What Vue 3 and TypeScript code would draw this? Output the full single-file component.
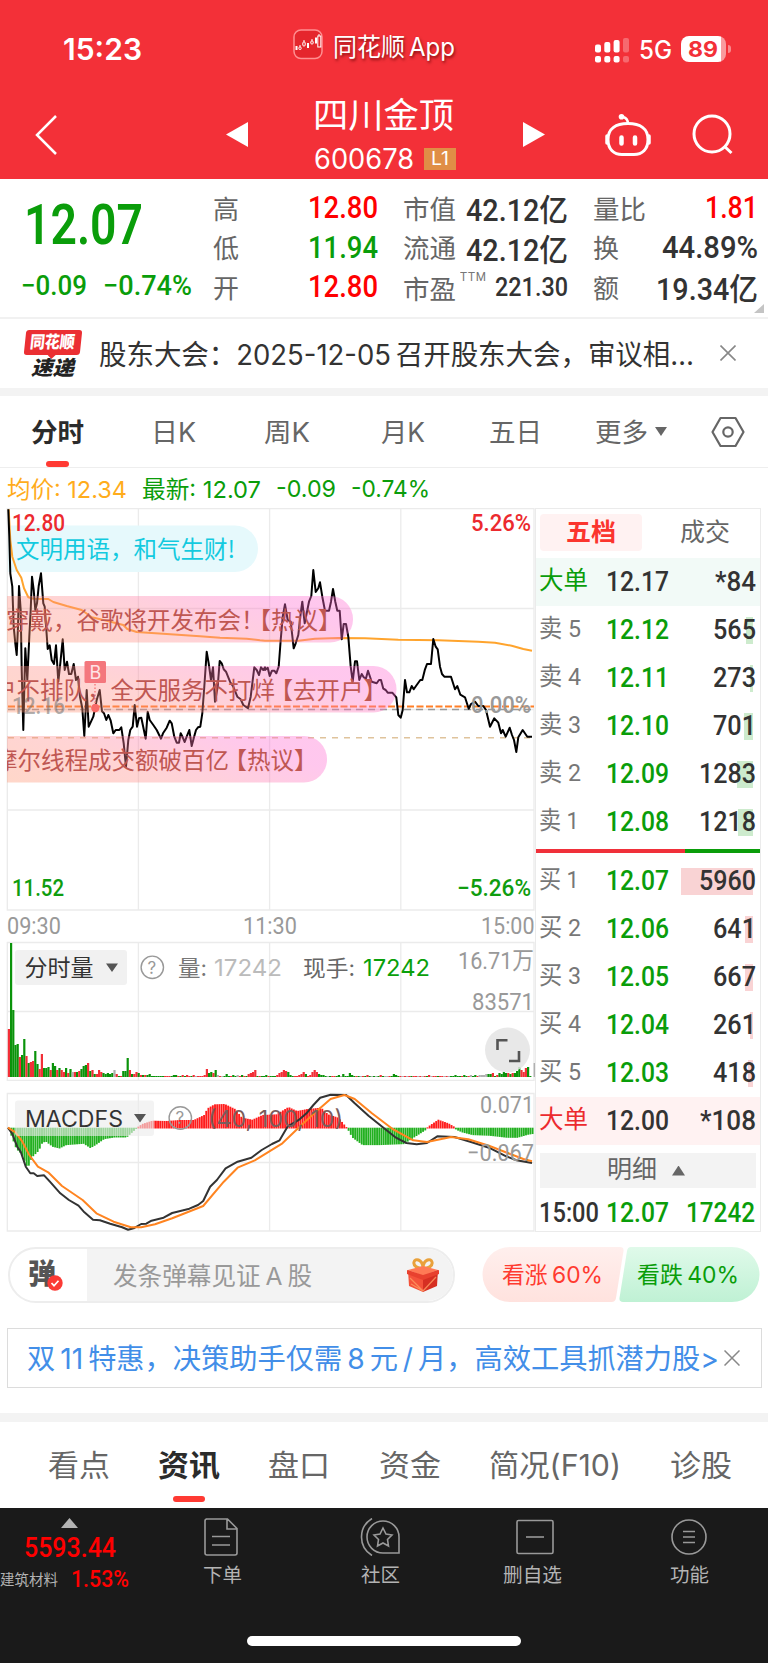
<script setup lang="ts">
type Pt = [number, number]
interface Label { t: string; x: number; y: number; w: number; size: number; fill: string; font?: string; bold?: boolean }
interface Level { name: string; price: string; vol: string; depth: number; nameW: number; volW: number }

// Squeezes or stretches a text horizontally so that it takes the given width
const vFit = {
  mounted(el: HTMLElement, binding: { value: number }) {
    const natural = el.getBoundingClientRect().width
    el.style.transformOrigin = '0 50%'
    el.style.transform = `scaleX(${binding.value / natural})`
    el.style.marginRight = `${binding.value - natural}px`
  },
}

const periods = [
  { t: '分时', w: 53, x: 31 }, { t: '日K', w: 45, x: 151 }, { t: '周K', w: 46, x: 264 },
  { t: '月K', w: 44, x: 381 }, { t: '五日', w: 53, x: 489 }, { t: '更多', w: 53, x: 595 },
]
const sections = [
  { t: '看点', w: 62, x: 48 }, { t: '资讯', w: 62, x: 158 }, { t: '盘口', w: 62, x: 268 },
  { t: '资金', w: 62, x: 379 }, { t: '简况(F10)', w: 132, x: 489 }, { t: '诊股', w: 62, x: 670 },
]
function gapBefore(list: { w: number; x: number }[], i: number): string {
  return `${i === 0 ? list[0].x : list[i].x - list[i - 1].x - list[i - 1].w}px`
}

const sells: Level[] = [
  { name: '卖 5', price: '12.12', vol: '565', depth: 7, nameW: 42, volW: 43 },
  { name: '卖 4', price: '12.11', vol: '273', depth: 3, nameW: 42, volW: 43 },
  { name: '卖 3', price: '12.10', vol: '701', depth: 9, nameW: 42, volW: 43 },
  { name: '卖 2', price: '12.09', vol: '1283', depth: 16, nameW: 42, volW: 57 },
  { name: '卖 1', price: '12.08', vol: '1218', depth: 15, nameW: 40, volW: 57 },
]
const buys: Level[] = [
  { name: '买 1', price: '12.07', vol: '5960', depth: 72, nameW: 40, volW: 57 },
  { name: '买 2', price: '12.06', vol: '641', depth: 8, nameW: 42, volW: 43 },
  { name: '买 3', price: '12.05', vol: '667', depth: 8, nameW: 42, volW: 43 },
  { name: '买 4', price: '12.04', vol: '261', depth: 3, nameW: 42, volW: 43 },
  { name: '买 5', price: '12.03', vol: '418', depth: 5, nameW: 42, volW: 43 },
]

function parse(s: string): Pt[] {
  return s.trim().split(/\s+/).map((p) => p.split(',').map(Number) as Pt)
}
function line(pts: Pt[]): string {
  return pts.map(([x, y]) => `${x.toFixed(1)},${y.toFixed(1)}`).join(' ')
}
const place = (s: string, dx: number, dy: number, kx: number): Pt[] =>
  parse(s).map(([x, y]) => [dx + x / kx, dy + y / 3])

const morning = '25,28 28,110 31,220 37,260 41,380 46,430 50,465 54,380 57,258 62,330 65,510 70,690 76,445 82,540 88,410 92,330 96,230 101,270 106,330 111,310 116,258 123,220 130,310 134,320 143,447 149,436 155,480 162,492 168,436 175,545 181,490 188,418 194,510 201,485 207,522 214,522 221,492 228,540 234,530 240,590 247,625 253,708 260,570 266,680 280,650 290,600 299,570 306,634 312,640 319,660 325,645 332,662 340,700 347,690 358,690 364,682 371,730 378,800 385,720 391,690 398,680 404,615 411,680 417,655 424,653 437,716 443,635 449,660 460,675 470,690 483,716 489,700 500,683 509,662 515,670 523,710 530,728 537,728 542,700 548,712 554,726 560,710 568,690 575,738 582,712 588,690 594,682 601,680 607,640 613,560 620,455 626,490 633,540 639,502 645,605 653,560 659,483 665,490 671,508 678,515 690,545 700,560 712,590 722,598 730,615 744,625 752,590 763,502 770,510 777,525 783,502 790,510 795,502'
const afternoon = '0,510 8,503 14,528 21,512 28,512 34,520 41,500 47,420 53,350 60,313 68,360 77,365 86,445 92,430 100,405 107,340 112,305 119,370 125,340 132,305 139,288 145,210 152,276 160,265 165,247 172,290 180,332 192,332 198,305 204,267 211,305 217,332 224,332 230,418 236,372 243,372 250,410 257,500 263,545 270,484 276,484 283,540 290,522 296,532 303,535 309,512 320,545 335,550 342,540 348,540 355,566 362,570 368,578 382,578 394,592 400,645 407,653 413,630 420,540 426,577 433,577 440,558 446,568 455,555 466,540 472,540 480,508 486,492 498,492 505,417 512,440 518,448 525,500 531,522 538,530 558,530 570,568 577,558 586,584 600,592 611,626 618,612 630,605 640,618 655,618 663,630 675,680 688,655 700,668 708,700 713,690 722,710 734,683 741,705 747,720 754,756 760,712 773,690 787,710 801,710'
const price = line([...place(morning, 0, 500, 3), ...place(afternoon, 265, 500, 3)])
const average = line([
  ...place('26,28 31,120 37,170 50,210 64,233 72,265 85,292 100,296 145,297 160,306 200,318 245,330 275,352 320,362 370,375 382,387 410,396 500,402 600,409 660,413 740,416 780,421', 0, 500, 3),
  ...place('0,422 100,422 150,416 220,414 300,415 400,419 520,421 640,425 690,428 740,437 775,447 801,452', 265, 500, 3),
])

const K = 2.904
const dif = line(place('23,128 35,145 50,185 60,200 75,245 88,265 98,265 108,273 128,271 145,290 175,325 200,345 228,362 245,382 270,404 290,406 320,416 355,427 372,434 388,430 410,417 425,416 440,407 475,398 500,384 550,371 575,360 590,348 610,305 630,285 655,250 690,230 730,218 760,195 790,177 812,166 835,125 870,103 890,85 910,60 930,38 960,29 1005,30 1030,55 1070,92 1110,125 1150,158 1180,174 1210,178 1240,174 1270,154 1320,156 1370,172 1420,188 1470,214 1500,226 1545,234', 0, 1085, K))
const dea = line(place('23,128 45,142 65,170 85,210 110,245 140,262 180,303 240,345 280,385 330,410 380,427 410,427 450,418 500,400 590,363 650,290 690,248 740,226 820,175 870,125 920,78 960,42 1000,30 1030,42 1080,85 1140,132 1200,166 1240,171 1310,156 1360,163 1420,182 1480,206 1520,222 1545,229', 0, 1085, K))

const zeroY = 1127.7
const histShape = place('23,130 45,190 60,205 78,248 90,215 110,195 120,172 130,167 150,183 170,188 190,178 240,174 260,187 275,178 300,160 330,155 365,155 392,130 410,117 440,107 480,108 520,105 560,105 590,90 600,70 620,58 650,57 680,72 700,98 730,104 760,90 800,88 835,66 860,78 890,72 930,68 950,88 980,98 1003,126 1008,132 1020,155 1050,178 1100,178 1170,175 1200,155 1235,132 1240,125 1270,104 1300,115 1318,126 1322,132 1340,140 1370,148 1420,150 1470,156 1500,156 1530,147 1548,144', 0, 1085, K)
const hist = Array.from({ length: 240 }, (_, i) => {
  const x = 8.2 + i * 2.19
  let j = 0
  while (j < histShape.length - 2 && histShape[j + 1][0] < x) j++
  const [x0, y0] = histShape[j]
  const [x1, y1] = histShape[j + 1]
  const y = y0 + ((y1 - y0) * (x - x0)) / (x1 - x0)
  return { x, y: Math.min(y, zeroY), h: Math.abs(y - zeroY) + 0.8, fill: y < zeroY ? '#ff1c1c' : '#22b020' }
})

// One entry per minute: r rising, g falling, n unchanged, followed by the bar height
const volumeData = 'r48 g134 g67 g32 g33 r20 g22 g38 r21 g14 r15 r16 g26 g13 r8 r23 g9 g9 g10 r7 g14 g11 r7 g9 r7 r5 g9 r4 g8 n5 r5 g5 r6 g8 g11 g12 r14 g6 r7 g3 r3 r7 r5 g4 g3 g4 g3 g4 n7 r3 g1 r1 g6 g6 g19 r7 g3 r3 r5 g4 r2 g2 r2 g2 g3 g1 g1 g1 g1 g1 g1 r1 r1 r1 g1 g2 g2 r1 g1 r2 g1 r2 r1 g1 r2 n1 r1 r1 r1 r2 r8 g4 g5 r4 g7 n2 r1 n1 g1 g3 g1 r1 g2 g1 n2 r1 g2 r1 g1 r3 r4 r5 r7 g1 r1 g1 g1 g2 r1 g1 g1 g1 r2 r4 r5 r7 r6 g5 g2 g1 r1 r1 r2 r3 r5 g3 r1 r2 r5 r7 r5 g3 g2 g2 g1 n1 g1 r1 r1 g1 g2 n1 g3 g1 g1 g4 g2 g1 r1 g1 n1 r1 g1 r2 g1 n1 g1 n1 g1 r2 g1 n1 n1 r1 g1 g3 g2 g1 r1 n1 r1 n1 r1 g1 r1 r1 n1 r1 n1 r1 g1 r2 n1 r1 r1 g1 r1 r1 n1 r1 n1 g1 g1 g2 g1 g1 r1 g2 g1 r1 n2 g1 g2 r1 n2 n2 n2 n3 g3 g3 r4 g1 r2 g4 g3 g5 g4 r4 g3 r4 g4 g6 g10 r7 r5 r9 g10 g1 n0 n14'
const tint: Record<string, string> = { r: '#f22f37', g: '#0a930a', n: '#b0b0b0' }
const volume = volumeData.split(' ').map((d, i) => ({ x: 7.8 + i * 2.2, h: Number(d.slice(1)), fill: tint[d[0]] }))

const din = 'Roboto, "Noto Sans CJK SC", sans-serif'
const sans = 'Inter, "Noto Sans CJK SC", sans-serif'
const labels: Label[] = [
  { t: '12.80', x: 12, y: 531, w: 53, size: 24, fill: '#ec2a2e', bold: true },
  { t: '5.26%', x: 471, y: 531, w: 60, size: 24, fill: '#ec2a2e', bold: true },
  { t: '12.16', x: 12, y: 713.5, w: 53, size: 24, fill: 'rgba(110,110,110,.55)', bold: true },
  { t: '0.00%', x: 471, y: 713, w: 60, size: 24, fill: '#999', bold: true },
  { t: '11.52', x: 12, y: 896, w: 52, size: 24, fill: '#0f9d0f', bold: true },
  { t: '−5.26%', x: 457, y: 896, w: 74, size: 24, fill: '#0f9d0f', bold: true },
  { t: '09:30', x: 7, y: 934, w: 54, size: 24.5, fill: '#999' },
  { t: '11:30', x: 243, y: 934, w: 54, size: 24.5, fill: '#999' },
  { t: '15:00', x: 481, y: 934, w: 53.5, size: 24.5, fill: '#999' },
  { t: '16.71万', x: 458, y: 969, w: 76, size: 24, fill: '#999' },
  { t: '83571', x: 472, y: 1010, w: 62, size: 24, fill: '#999' },
  { t: '0.071', x: 480, y: 1113, w: 54, size: 24, fill: '#999' },
  { t: '−0.067', x: 467, y: 1161, w: 67, size: 24, fill: '#999' },
  { t: '分时量', x: 24.5, y: 975.7, w: 69, size: 23, fill: '#333' },
  { t: '量:', x: 178, y: 975.5, w: 29, size: 22, fill: '#777', font: sans },
  { t: '17242', x: 214, y: 975.5, w: 68, size: 23, fill: '#bbb', font: sans },
  { t: '现手:', x: 303, y: 975.5, w: 52, size: 22, fill: '#666', font: sans },
  { t: '17242', x: 363, y: 975.5, w: 67, size: 23, fill: '#0aa00a', font: sans },
  { t: 'MACDFS', x: 25, y: 1127, w: 98, size: 22.5, fill: '#333', font: sans },
  { t: '(40, 100, 10)', x: 208, y: 1127, w: 135, size: 23, fill: '#7b5c5c', font: sans },
]
const bullets = [
  { text: '穿戴，谷歌将开发布会！', link: '【热议】', pull: -17, x: 6, y: 596, end: 353 },
  { text: '户不排队，全天服务不打烊', link: '【去开户】', pull: -5.5, x: -7, y: 666, end: 396.5 },
  { text: '摩尔线程成交额破百亿', link: '【热议】', pull: -5.5, x: -6, y: 736, end: 327 },
]
</script>

<template>
  <div class="phone">
    <header class="top">
      <div class="status">
        <span v-fit="79" class="clock">15:23</span>
        <svg class="appicon" width="30" height="31" viewBox="0 0 30 31">
          <rect x="1" y="1" width="28" height="28.5" rx="7" fill="#e5262d" stroke="#ff8f91" stroke-width="1.5" />
          <g stroke="#fff" fill="none">
            <path d="M3.500 17v4M15 14v5M23 8.500v6" stroke-width="2" />
            <path d="M7 16v2M11 11v2M19 10v2M26 5v2" />
            <rect x="5.800" y="18" width="2.400" height="2.500" rx="1" /><rect x="9.800" y="13" width="2.400" height="4" rx="1" />
            <rect x="17.800" y="12" width="2.400" height="3" rx="1" /><rect x="24.800" y="7" width="3" height="11" />
          </g>
        </svg>
        <span v-fit="122" class="appname">同花顺 App</span>
        <svg class="signal" width="35" height="26" viewBox="0 0 35 26" fill="#fff">
          <rect x="0" y="7.500" width="6" height="8" rx="2" /><rect x="9.300" y="5" width="6" height="10.500" rx="2" />
          <rect x="18.600" y="3" width="6" height="12.500" rx="2" /><rect x="28" y="1" width="6" height="14.500" rx="2" opacity=".28" />
          <rect x="0" y="19" width="6" height="6.500" rx="2" /><rect x="9.300" y="19" width="6" height="6.500" rx="2" />
          <rect x="18.600" y="19" width="6" height="6.500" rx="2" /><rect x="28" y="19" width="6" height="6.500" rx="2" opacity=".28" />
        </svg>
        <span v-fit="33" class="net">5G</span>
        <div class="battery"><span v-fit="30">89</span></div>
        <i class="nub"></i>
      </div>
      <div class="nav">
        <svg class="back" width="24" height="42" viewBox="0 0 24 42"><path d="M22 2 3 21l19 19" fill="none" stroke="#fff" stroke-width="2.500" /></svg>
        <svg class="prev" width="22" height="25" viewBox="0 0 22 25"><path d="M22 0v25L0 12.500z" fill="#fff" /></svg>
        <div class="stock">
          <span v-fit="141" class="name">四川金顶</span>
          <div class="code"><span v-fit="100">600678</span><b><span v-fit="18">L1</span></b></div>
        </div>
        <svg class="next" width="22" height="25" viewBox="0 0 22 25"><path d="M0 0v25l22-12.500z" fill="#fff" /></svg>
        <svg class="robot" width="48" height="44" viewBox="0 0 48 44" fill="none" stroke="#fff" stroke-width="3">
          <path d="M24 11c0-4-1-6-5-7" stroke-width="2.500" /><circle cx="17.500" cy="3.800" r="2.800" fill="#fff" stroke="none" />
          <path d="M24 10.500c12 0 20 5 20 16 0 10-6 15-14 15H18c-8 0-14-5-14-15 0-11 8-16 20-16z" />
          <path d="M3 23v7M45 23v7" stroke-width="3.500" stroke-linecap="round" /><path d="M17.500 24.500v6M31 24.500v6" stroke-width="4.500" stroke-linecap="round" />
        </svg>
        <svg class="search" width="42" height="42" viewBox="0 0 42 42" fill="none" stroke="#fff" stroke-width="3"><circle cx="20" cy="20" r="18" /><path d="m32 32 7.500 7" /></svg>
      </div>
    </header>

    <section class="quote">
      <div class="last">
        <span v-fit="119" class="big">12.07</span>
        <div class="chg"><span v-fit="66">−0.09</span><span v-fit="89">−0.74%</span></div>
      </div>
      <dl class="c1">
        <div><dt v-fit="26">高</dt><dd v-fit="70" class="red">12.80</dd></div>
        <div><dt v-fit="26">低</dt><dd v-fit="70" class="green">11.94</dd></div>
        <div><dt v-fit="26">开</dt><dd v-fit="70" class="red">12.80</dd></div>
      </dl>
      <dl class="c2">
        <div><dt v-fit="53">市值</dt><dd v-fit="102">42.12亿</dd></div>
        <div><dt v-fit="53">流通</dt><dd v-fit="102">42.12亿</dd></div>
        <div><dt v-fit="53" class="pe">市盈</dt><sup v-fit="27">TTM</sup><dd v-fit="73" class="small">221.30</dd></div>
      </dl>
      <dl class="c3">
        <div><dt v-fit="53">量比</dt><dd v-fit="53" class="red">1.81</dd></div>
        <div><dt v-fit="26">换</dt><dd v-fit="96">44.89%</dd></div>
        <div><dt v-fit="26">额</dt><dd v-fit="102">19.34亿</dd></div>
      </dl>
      <i class="corner"></i>
    </section>

    <section class="news">
      <div class="badge">
        <div class="badge-top"><span v-fit="47">同花顺</span></div>
        <span v-fit="43" class="badge-bottom">速递</span>
      </div>
      <span v-fit="595" class="headline">股东大会：2025-12-05 召开股东大会，审议相…</span>
      <svg width="16" height="16" viewBox="0 0 16 16" stroke="#888" stroke-width="1.600"><path d="m.500.500 15 15m0-15-15 15" /></svg>
    </section>

    <nav class="periods">
      <span v-for="(p, i) in periods" :key="p.t" class="cell" :class="{ on: i === 0 }" :style="{ marginLeft: gapBefore(periods, i), width: p.w + 'px' }"><span v-fit="p.w">{{ p.t }}</span></span>
      <i class="caret"></i>
      <svg class="hex" width="34" height="32" viewBox="0 0 34 32" fill="none" stroke="#666" stroke-width="2.200"><path d="M9.500 2h15L32.500 16l-8 14h-15L1.500 16z" stroke-linejoin="round" /><circle cx="17" cy="16" r="4.700" /></svg>
    </nav>

    <div class="ticks">
      <span v-fit="120" class="avg">均价: 12.34</span><span v-fit="119">最新: 12.07</span><span v-fit="60">-0.09</span><span v-fit="79">-0.74%</span>
    </div>

    <main class="board">
      <svg class="chart" width="535" height="725" viewBox="0 508 535 725">
        <defs>
          <linearGradient id="bullet" x1="0" x2="1" y1="0.300" y2="0">
            <stop offset="0" stop-color="#ff926f" /><stop offset=".35" stop-color="#ff8a8c" /><stop offset=".8" stop-color="#ff69d0" /><stop offset="1" stop-color="#ff69d0" />
          </linearGradient>
          <clipPath id="area"><rect x="7" y="508" width="528" height="724" /></clipPath>
        </defs>
        <g fill="none" stroke="#ebebeb" stroke-width="1.300">
          <path d="M7.300 508.600h526.700V910H7.300zM7.300 608.500H534M7.300 709.500H534M7.300 810H534M138.400 508v402M269.600 508v402M400.800 508v402" />
          <path d="M7.300 942.500H534v137.800H7.300zM7.300 1011.500H534M138.400 942v138M269.600 942v138M400.800 942v138" />
          <path d="M7.300 1093.500H534V1231H7.300zM7.300 1162.500H534M138.400 1093v138M269.600 1093v138M400.800 1093v138" />
        </g>
        <path d="M8 709.500H534" stroke="#999" stroke-width="1.300" stroke-dasharray="7 5" />
        <path d="M8 706.500H534" stroke="#ff7f27" stroke-width="2" stroke-dasharray="7 2.500" />
        <path d="M8 737.700H534" stroke="#dfc39c" stroke-width="1.400" stroke-dasharray="6 6" />
        <rect x="8" y="525.500" width="250" height="46.500" rx="23" fill="#e6f9fc" />
        <rect x="8" y="525.500" width="60" height="46.500" fill="#e6f9fc" />
        <g fill="none" stroke-linejoin="round">
          <polyline :points="average" stroke="#ffa42d" stroke-width="2" />
          <polyline :points="price" stroke="#000" stroke-width="2" />
        </g>
        <path d="M95 684v20" stroke="#f5757b" stroke-width="1.500" stroke-dasharray="1.500 2" />
        <circle cx="95.300" cy="708" r="4.200" fill="#f5535b" />
        <text x="16" y="557.500" textLength="219" lengthAdjust="spacingAndGlyphs" class="cn" fill="#13cadf">文明用语，和气生财!</text>
        <g clip-path="url(#area)">
          <g v-for="b in bullets" :key="b.y">
            <rect x="-60" :y="b.y" :width="b.end + 60" height="46.500" rx="23" fill="url(#bullet)" opacity=".37" />
            <text :x="b.x" :y="b.y + 32.500" class="cn" fill="#bf5752">{{ b.text }}<tspan :dx="b.pull">{{ b.link }}</tspan></text>
          </g>
        </g>
        <rect x="84.500" y="661" width="21.500" height="22" rx="1.500" fill="#f4777d" />
        <text x="89.500" y="678.500" font-size="18" fill="#ffe3e6" :font-family="sans">B</text>

        <rect v-for="(v, i) in volume" :key="'v' + i" :x="v.x" :y="1077 - v.h" width="2.200" :height="v.h" :fill="v.fill" />
        <rect v-for="(m, i) in hist" :key="'m' + i" :x="m.x" :y="m.y" width="1.900" :height="m.h" :fill="m.fill" />
        <g fill="none" stroke-linejoin="round" stroke-width="2">
          <polyline :points="dif" stroke="#333" />
          <polyline :points="dea" stroke="#ff8420" />
        </g>

        <rect x="15" y="950" width="112" height="35" rx="3" fill="#f1f1f1" />
        <rect x="15" y="1100.500" width="139" height="35.500" rx="3" fill="#ececec" opacity=".62" />
        <path d="M106 963.500h12l-6 8.500zM134 1114h12l-6 8.500z" fill="#555" />
        <g fill="none" stroke="#999" stroke-width="1.400"><circle cx="152.300" cy="967.300" r="11.200" /><circle cx="180.300" cy="1118" r="11.200" /></g>
        <text x="147.500" y="973.500" font-size="17" fill="#999" :font-family="sans">?</text>
        <text x="175.500" y="1124" font-size="17" fill="#999" :font-family="sans">?</text>
        <circle cx="507.500" cy="1050" r="22.500" fill="#e4e4e4" opacity=".85" />
        <path d="M497.500 1050v-9.800h10M519 1051v10h-10" fill="none" stroke="#555" stroke-width="2.600" />
        <text v-for="l in labels" :key="l.t + l.x" :x="l.x" :y="l.y" :textLength="l.w" lengthAdjust="spacingAndGlyphs" :font-size="l.size" :fill="l.fill" :font-family="l.font ?? din" :font-weight="l.bold ? 500 : 400">{{ l.t }}</text>
      </svg>

      <aside class="book">
        <div class="booktabs"><div class="on"><span v-fit="50">五档</span></div><div><span v-fit="50">成交</span></div></div>
        <div class="row block sell"><span v-fit="49" class="lab green">大单</span><span v-fit="63" class="px dark">12.17</span><span v-fit="41" class="vol">*84</span></div>
        <div v-for="r in sells" :key="r.name" class="row">
          <span v-fit="r.nameW" class="lab">{{ r.name }}</span><span v-fit="63" class="px green">{{ r.price }}</span>
          <i class="depth down" :style="{ width: r.depth + 'px' }"></i><span v-fit="r.volW" class="vol">{{ r.vol }}</span>
        </div>
        <div class="ratio"><i></i></div>
        <div v-for="r in buys" :key="r.name" class="row">
          <span v-fit="r.nameW" class="lab">{{ r.name }}</span><span v-fit="63" class="px green">{{ r.price }}</span>
          <i class="depth up" :style="{ width: r.depth + 'px' }"></i><span v-fit="r.volW" class="vol">{{ r.vol }}</span>
        </div>
        <div class="row block buy"><span v-fit="49" class="lab red2">大单</span><span v-fit="63" class="px dark">12.00</span><span v-fit="56" class="vol">*108</span></div>
        <div class="detail"><span v-fit="50">明细</span><i></i></div>
        <div class="deal"><span v-fit="60">15:00</span><span v-fit="63" class="mid green">12.07</span><span v-fit="69" class="green">17242</span></div>
      </aside>
    </main>

    <section class="barrage">
      <div class="input">
        <div class="toggle">
          <span v-fit="28">弹</span>
          <svg width="16" height="16" viewBox="0 0 16 16"><circle cx="8" cy="8" r="7.700" fill="#fb3a35" /><path d="m4.500 8 2.500 2.700 4.500-5" fill="none" stroke="#fff" stroke-width="1.700" /></svg>
        </div>
        <div class="field">
          <span v-fit="199">发条弹幕见证 A 股</span>
          <svg width="32" height="35" viewBox="0 0 32 35">
            <path d="M16 10C11 11 6 8 7 4s8-3 9 5c1-8 8-9 9-5s-4 7-9 6z" fill="none" stroke="#e9a13b" stroke-width="3" />
            <path d="m1 12 15-4 15 4-15 6z" fill="#ff7a55" /><path d="m1 12 15 6v16L2 28z" fill="#f4523a" /><path d="m31 12-15 6v16l14-6z" fill="#d62f22" />
            <path d="m0 12 16 5v5L0 16zM32 12l-16 5v5l16-6z" fill="#e8412e" /><path d="m3 20 13 13M4 26l12 7M29 19 16 33" stroke="#ff9a62" stroke-width="1.300" opacity=".8" />
          </svg>
        </div>
      </div>
      <div class="mood">
        <svg width="279" height="56" viewBox="0 0 279 56">
          <defs>
            <linearGradient id="bull" x2="0" y2="1"><stop stop-color="#ffefed" /><stop offset="1" stop-color="#ffe2de" /></linearGradient>
            <linearGradient id="bear" x2="0" y2="1"><stop stop-color="#e0faea" /><stop offset="1" stop-color="#bff1d4" /></linearGradient>
          </defs>
          <path d="M28 0H138q4 0 3.500 4L134 51q-.6 4-4.500 4H28a27.500 27.500 0 0 1 0-55z" fill="url(#bull)" />
          <path d="M149 0H250a27.500 27.500 0 0 1 0 55H141q-4 0-3.500-4L145 4q.6-4 4-4z" fill="url(#bear)" />
        </svg>
        <div class="moodtext"><span v-fit="101">看涨 60%</span><span v-fit="102">看跌 40%</span></div>
      </div>
    </section>

    <section class="promo">
      <span v-fit="692">双 11 特惠，决策助手仅需 8 元 / 月，高效工具抓潜力股&gt;</span>
      <svg width="16" height="16" viewBox="0 0 16 16" stroke="#888" stroke-width="1.500"><path d="m.500.500 15 15m0-15-15 15" /></svg>
    </section>

    <nav class="sections">
      <span v-for="(p, i) in sections" :key="p.t" class="cell" :class="{ on: i === 1 }" :style="{ marginLeft: gapBefore(sections, i), width: p.w + 'px' }"><span v-fit="p.w">{{ p.t }}</span></span>
    </nav>

    <footer class="bottom">
      <div class="bar">
        <div class="index">
          <i></i>
          <span v-fit="92" class="val">5593.44</span>
          <div><small v-fit="58">建筑材料</small><span v-fit="58">1.53%</span></div>
        </div>
        <div class="item i1">
          <svg width="38" height="38" viewBox="0 0 38 38"><path d="M3.500 1h22L35 10.500V35q0 2-2 2H5q-2 0-2-2V3q0-2 2-2zM25 1v10h10M10 18.500h18M10 27h18" /></svg>
          <span v-fit="39">下单</span>
        </div>
        <div class="item i2">
          <svg width="42" height="38" viewBox="0 0 42 38"><path d="M24 3a16 16 0 0 0 0 32h16V19A16 16 0 0 0 24 3zM13 .500C-1 9-1 29 13 37.500M24 10l3 6 6 1-4.500 4.500 1 6.500-5.500-3-5.500 3 1-6.500L15 17l6-1z" /></svg>
          <span v-fit="39">社区</span>
        </div>
        <div class="item i3">
          <svg width="38" height="38" viewBox="0 0 38 38"><rect x="1" y="2.500" width="36" height="33" rx="1.500" /><path d="M10 19h18" /></svg>
          <span v-fit="59">删自选</span>
        </div>
        <div class="item i4">
          <svg width="38" height="38" viewBox="0 0 38 38"><circle cx="19" cy="19" r="17" /><path d="M13 13.500h12M13 19h12M13 24.500h12" /></svg>
          <span v-fit="39">功能</span>
        </div>
      </div>
      <div class="home"></div>
    </footer>
  </div>
</template>

<style>
body { margin: 0; background: #fff; }
</style>

<style scoped>
* { box-sizing: border-box; }
.phone { width: 768px; height: 1663px; overflow: hidden; background: #fff; color: #333; font-family: Inter, "Noto Sans CJK SC", sans-serif; white-space: nowrap; }
span, dt, dd, sup, small { display: block; flex: none; margin: 0; width: max-content; }
svg { display: block; flex: none; }
i { display: block; flex: none; font-style: normal; }
.red { color: #ff0000; }
.red2 { color: #ec2a2e; }
.green { color: #0a9d0a; }

.top { height: 179px; background: #f33038; color: #fff; }
.status { height: 90px; display: flex; align-items: center; padding: 8px 0 0 63px; }
.clock { font-size: 30px; font-weight: 600; }
.appicon { margin: -9px 0 0 151px; }
.appname { margin: -9px 0 0 10px; font-size: 25px; text-shadow: 1px 2px 3px rgba(90, 0, 0, .7); word-spacing: -3px; }
.signal { margin-left: 140px; margin-top: 1px; }
.net { margin-left: 9px; font-size: 25px; font-weight: 500; margin-top: 2px; }
.battery { margin-left: 9px; width: 45px; height: 26px; border-radius: 8px; background: linear-gradient(90deg, #fff 40px, #f99a9e 40px); color: #f33038; font-size: 21.500px; line-height: 26px; font-weight: 700; padding-left: 7px; }
.nub { width: 3px; height: 8px; margin-left: 2px; border-radius: 0 4px 4px 0; background: #f9888c; }
.nav { height: 89px; display: flex; align-items: center; padding-left: 34px; }
.back { margin-top: 1px; }
.prev { margin-left: 168px; }
.stock { margin-left: 65px; width: 277px; height: 89px; }
.name { margin-top: 3px; font-size: 35px; line-height: 45px; font-weight: 400; height: 45px; }
.code { display: flex; align-items: center; height: 41px; padding-left: 1px; font-size: 28px; line-height: 40px; }
.code b { margin-left: 10px; width: 32px; height: 22px; background: #e08e46; font-size: 18px; line-height: 22px; font-weight: 400; padding-left: 7px; }
.next { margin-left: -67px; }
.robot { margin-left: 59px; margin-top: 1px; }
.search { margin-left: 40px; }

.quote { height: 140px; display: flex; position: relative; font-family: Roboto, "Noto Sans CJK SC", sans-serif; border-bottom: 2px solid #f1f1f1; }
.last { width: 213px; color: #0a9d0a; }
.big { font-size: 55px; line-height: 60px; font-weight: 600; margin: 16px 0 0 24px; }
.chg { display: flex; font-size: 28px; line-height: 34px; gap: 16px; padding-left: 21px; margin-top: 14px; font-weight: 500; }
dl { margin: 9px 0 0; font-size: 31px; font-weight: 500; }
dl > div { display: flex; justify-content: space-between; align-items: center; height: 39.500px; }
dt { color: #666; font-size: 26px; font-weight: 400; margin-top: -1px; }
.c1 { width: 165px; }
.c2 { width: 165px; margin-left: 25px; }
.c3 { width: 165px; margin-left: 25px; }
.c2 > div { justify-content: flex-start; }
.c2 dd { margin-left: auto; }
sup { font-size: 13px; line-height: 12px; color: #777; font-weight: 400; margin: -20px 0 0 4px; letter-spacing: 1px; }
.pe { margin-top: 2px; }
.small { font-size: 26px; }
.corner { position: absolute; right: 4px; bottom: 4px; width: 10px; height: 9px; background: #c4c4c4; clip-path: polygon(100% 0, 100% 100%, 0 100%); }

.news { height: 69px; display: flex; align-items: center; padding-left: 24px; }
.badge { width: 58px; height: 48px; margin-right: 17px; }
.badge-top { height: 25px; margin: 0 1px; padding-left: 5px; background: #eb2f33; border-radius: 3px; transform: skewX(-6deg); color: #fff; font-size: 17px; line-height: 24px; font-weight: 900; position: relative; }
.badge-top::after { content: ""; position: absolute; left: 24px; top: 25px; border: 4px solid transparent; border-top-color: #eb2f33; }
.badge-bottom { margin: 2px 0 0 7px; font-size: 20px; line-height: 22px; font-weight: 900; font-style: italic; color: #222; }
.headline { font-size: 28px; word-spacing: -3px; margin-top: -2px; }
.news > svg { margin-left: 26px; margin-top: -1px; }

.periods { height: 80px; border-top: 8px solid #f3f3f3; border-bottom: 1.500px solid #eee; display: flex; align-items: center; font-size: 26.500px; color: #666; }
.cell { flex: none; position: relative; }
.cell.on { color: #2b2b2b; font-weight: 600; }
.periods .cell { line-height: 40px; margin-top: 1px; }
.periods .on::after { content: ""; position: absolute; left: 15px; top: 49px; width: 23px; height: 6px; border-radius: 3px; background: #ff3a33; }
.caret { margin-left: 7px; width: 12px; height: 9px; background: #666; clip-path: polygon(0 0, 100% 0, 50% 100%); }
.hex { margin-left: 44px; }

.ticks { height: 40px; display: flex; align-items: center; padding: 0 0 0 7px; font-size: 23.500px; color: #0a9d0a; gap: 15px; }
.ticks .avg { color: #ffac1c; }

.board { display: flex; height: 724px; }
.cn { font-family: "Noto Sans CJK SC", sans-serif; font-size: 23.500px; }
.book { width: 226px; height: 724px; border: 1.500px solid #ebebeb; font-family: Roboto, "Noto Sans CJK SC", sans-serif; font-weight: 500; font-size: 27.500px; }
.booktabs { display: flex; height: 49px; padding: 5px 4px 0; gap: 7px; font-size: 25px; line-height: 37px; font-weight: 400; color: #666; }
.booktabs > div { width: 102px; height: 37px; border-radius: 4px; padding-left: 26px; }
.booktabs > div + div { padding-left: 31px; }
.booktabs .on { background: #fff2f2; color: #fb352e; font-weight: 700; }
.row { display: grid; grid-template-columns: 67px 64px 1fr; align-items: center; height: 48px; padding: 0 4px 0 3px; line-height: 48px; }
.row > * { grid-row: 1; }
.lab { font-size: 24.500px; color: #777; font-weight: 400; grid-column: 1; position: relative; top: -1px; }
.lab.green { color: #0a9d0a; }
.lab.red2 { color: #ec2a2e; }
.px { grid-column: 2; }
.vol { grid-column: 3; justify-self: end; position: relative; }
.depth { grid-column: 3; justify-self: end; margin-right: 3px; height: 27px; }
.down { background: #cdebcd; }
.up { background: #f9d3d4; }
.sell { background: #f2faf7; }
.buy { background: #fff2f2; }
.ratio { height: 4px; margin: 3px 0 4px; background: #0a9d0a; }
.ratio i { height: 4px; width: 149px; background: #f0303a; }
.detail { height: 35px; margin: 8px 4px 0; background: #f3f3f3; display: flex; align-items: center; padding-left: 67px; font-size: 25px; line-height: 32px; font-weight: 400; color: #666; }
.detail span { margin-top: -1px; }
.detail i { margin-left: 15px; width: 13px; height: 10px; background: #666; clip-path: polygon(50% 0, 100% 100%, 0 100%); }
.deal { display: flex; height: 43px; line-height: 49px; padding-left: 3px; }
.deal .mid { margin-left: 7px; }
.deal span:last-child { margin-left: 17px; }

.barrage { display: flex; height: 96px; padding: 15px 7px 0 8px; }
.input { width: 447px; height: 56px; border: 2px solid #ededed; border-radius: 28px; display: flex; overflow: hidden; }
.toggle { width: 77px; display: flex; align-items: center; padding-left: 18px; font-size: 28px; font-weight: 900; color: #555; line-height: 48px; }
.toggle span { margin-top: -3px; }
.toggle svg { margin: 15px 0 0 -9px; z-index: 1; }
.field { flex: 1; background: #f3f3f3; display: flex; align-items: center; justify-content: space-between; padding: 0 14px 0 26px; font-size: 24.500px; color: #999; word-spacing: -2px; }
.field span { margin-top: -2px; }
.mood { display: grid; margin-left: 27px; }
.mood > * { grid-area: 1 / 1; }
.moodtext { display: flex; gap: 34px; padding-left: 20px; font-size: 23px; line-height: 56px; color: #ff3b30; word-spacing: -2px; }
.moodtext span + span { color: #0a9d0a; }

.promo { height: 60px; margin: 0 6px 0 7px; border: 1.500px solid #dcdcdc; display: flex; align-items: center; padding-left: 19px; font-size: 28.500px; color: #428ee8; word-spacing: -3px; }
.promo span { margin-top: -3px; }
.promo svg { margin-left: 5px; margin-top: -1px; }
.sections { height: 95px; margin-top: 25px; border-top: 9px solid #f3f3f3; display: flex; align-items: center; font-size: 30px; line-height: 40px; color: #666; }
.sections .on::after { content: ""; position: absolute; left: 15px; top: 51px; width: 32px; height: 6px; border-radius: 3px; background: #ff3a33; }

.bottom { height: 155px; background: #1a1a1a; color: #b3b3b3; }
.bar { display: flex; height: 128px; }
.index { width: 150px; color: #ff0000; font-family: Roboto, "Noto Sans CJK SC", sans-serif; font-weight: 500; }
.index i { margin: 10px 0 0 61px; width: 17px; height: 10px; background: #b3b3b3; clip-path: polygon(50% 0, 100% 100%, 0 100%); }
.val { margin: 3px 0 0 24px; font-size: 28px; line-height: 34px; }
.index div { display: flex; align-items: center; gap: 13px; font-size: 23px; line-height: 26px; }
.index small { font-size: 14.500px; font-weight: 400; color: #b3b3b3; padding-top: 3px; }
.item { display: flex; flex-direction: column; align-items: flex-start; padding-top: 10px; font-size: 19.500px; line-height: 24px; flex: none; }
.item svg { fill: none; stroke: #999; stroke-width: 1.600; }
.item span { margin-top: 7px; }
.i1 { width: 209px; padding-left: 52px; }
.i1 span { margin-left: 1px; }
.i2 { width: 144px; }
.i2 span { margin-left: 2px; }
.i3 { width: 167px; }
.i3 svg { margin-left: 13px; }
.i4 { width: 60px; }
.home { width: 274px; height: 10px; border-radius: 5px; background: #fff; margin-left: 247px; }
</style>
